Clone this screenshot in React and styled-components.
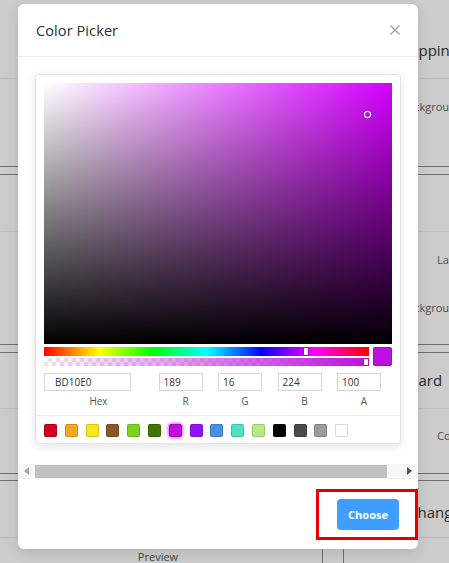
import React from 'react';
import styled, { createGlobalStyle } from 'styled-components';

const Global = createGlobalStyle`
  html, body { margin: 0; padding: 0; }
  body {
    font-family: 'Open Sans', 'Liberation Sans', sans-serif;
    background: #fff;
    width: 449px;
    height: 563px;
    overflow: hidden;
  }
  * { box-sizing: border-box; }
`;

const Screen = styled.div`
  position: relative;
  width: 449px;
  height: 563px;
  overflow: hidden;
  background: #fff;
`;

/* ---------- background page ---------- */
const Page = styled.div`
  display: flex;
  flex-direction: column;
`;

const lineColor = { dark: '#8c8c8c', faint: '#ececec', none: 'transparent' };

const Band = styled.div`
  height: ${p => p.$h}px;
  padding-top: ${p => p.$pt || 0}px;
  border-bottom: 1px solid ${p => lineColor[p.$line || 'none']};
  display: flex;
  flex-direction: column;
  gap: ${p => p.$gap || 0}px;
`;

const Heading = styled.div`
  margin-left: ${p => p.$x}px;
  font-size: 15px;
  line-height: 20px;
  color: #353535;
  white-space: nowrap;
`;

const Label = styled.div`
  margin-left: ${p => p.$x}px;
  font-size: 11px;
  line-height: 14px;
  color: #646464;
  white-space: nowrap;
`;

const BottomRow = styled.div`
  height: 25px;
  display: flex;
`;

const Cell = styled.div`
  width: ${p => p.$w}px;
  border-right: ${p => (p.$border ? '1px solid #8c8c8c' : 'none')};
  display: flex;
  justify-content: center;
  padding-top: 12px;
  padding-right: ${p => p.$pr || 0}px;
  font-size: 11px;
  line-height: 14px;
  color: #555;
`;

const Dim = styled.div`
  position: absolute;
  inset: 0;
  background: rgba(0, 0, 0, 0.2);
`;

/* ---------- modal ---------- */
const Modal = styled.div`
  position: absolute;
  left: 18px;
  top: 4px;
  width: 400px;
  height: 545px;
  background: #fff;
  border-radius: 6px;
  box-shadow: 0 4px 14px rgba(0, 0, 0, 0.12);
  display: flex;
  flex-direction: column;
  overflow: hidden;
`;

const Header = styled.div`
  height: 53px;
  padding: 0 18px;
  border-bottom: 1px solid #ebebeb;
  display: flex;
  align-items: center;
  justify-content: space-between;
`;

const Title = styled.div`
  font-size: 14.5px;
  color: #303030;
  letter-spacing: 0.1px;
`;

const Close = styled.button`
  border: none;
  background: none;
  padding: 0;
  width: 10px;
  height: 10px;
  display: flex;
  cursor: pointer;
`;

const Body = styled.div`
  flex: 1;
  padding: 17px 17px 0 17px;
  display: flex;
  flex-direction: column;
`;

const Card = styled.div`
  width: 366px;
  border: 1px solid #e4e4e4;
  border-radius: 4px;
  box-shadow: 0 2px 8px rgba(0, 0, 0, 0.12);
  background: #fff;
`;

const Top = styled.div`
  padding: 8px 8px 7px;
  display: flex;
  flex-direction: column;
`;

const Saturation = styled.div`
  position: relative;
  height: 261px;
  background: linear-gradient(to top, #000, rgba(0, 0, 0, 0)),
    linear-gradient(to right, #fff, hsl(290, 100%, 50%));
`;

const SatPointer = styled.div`
  position: absolute;
  left: 321px;
  top: 29px;
  width: 5px;
  height: 5px;
  border-radius: 50%;
  box-shadow: 0 0 0 1.2px #fff, 0 0 1px 2px rgba(0, 0, 0, 0.3);
`;

const Controls = styled.div`
  margin-top: 3px;
  display: flex;
  gap: 4px;
`;

const Sliders = styled.div`
  flex: 1;
  display: flex;
  flex-direction: column;
  gap: 2px;
`;

const Hue = styled.div`
  position: relative;
  height: 9px;
  background: linear-gradient(to right, #f00 0%, #ff0 17%, #0f0 33%, #0ff 50%, #00f 67%, #f0f 83%, #f00 100%);
`;

const Alpha = styled.div`
  position: relative;
  height: 8px;
  background:
    linear-gradient(to right, rgba(189, 16, 224, 0), rgb(189, 16, 224)),
    repeating-conic-gradient(#e6e6e6 0% 25%, #fff 0% 50%) 0 0 / 8px 8px;
`;

const Thumb = styled.div`
  position: absolute;
  top: 1px;
  left: ${p => p.$x}px;
  width: 4px;
  height: calc(100% - 2px);
  background: #fff;
  border-radius: 1px;
  box-shadow: 0 0 2px rgba(0, 0, 0, 0.6);
`;

const Preview = styled.div`
  width: 19px;
  height: 19px;
  border-radius: 2px;
  background: #bd10e0;
  box-shadow: inset 0 0 0 1px rgba(0, 0, 0, 0.15);
`;

const Fields = styled.div`
  margin-top: 7px;
  display: grid;
  grid-template-columns: 109px 54px 54px 54px 54px;
  column-gap: 5.5px;
`;

const Field = styled.div`
  display: flex;
  flex-direction: column;
`;

const Input = styled.input`
  width: ${p => p.$w}px;
  height: 18px;
  border: 1px solid #d6d6d6;
  border-radius: 0;
  padding: 0 0 0 ${p => p.$pl}px;
  font-family: 'Open Sans', 'Liberation Sans', sans-serif;
  font-size: 10px;
  color: #333;
  outline: none;
`;

const FieldLabel = styled.div`
  margin-top: 4px;
  text-align: center;
  font-size: 10px;
  line-height: 13px;
  color: #555;
`;

const Presets = styled.div`
  border-top: 1px solid #ececec;
  padding: 8px 8px 6px;
  display: flex;
  gap: 7.8px;
`;

const Swatch = styled.div`
  width: 13px;
  height: 13px;
  border-radius: 2px;
  background: ${p => p.$c};
  box-shadow: inset 0 0 0 1px rgba(0, 0, 0, 0.15)
    ${p => (p.$active ? `, 0 0 4px ${p.$c}` : '')};
`;

const Scrollbar = styled.div`
  margin: 20px -17px 0 -17px;
  height: 14px;
  background: #f7f7f7;
  display: flex;
  align-items: center;
`;

const Arrow = styled.div`
  width: 17px;
  display: flex;
  justify-content: center;
`;

const ScrollThumb = styled.div`
  width: 352px;
  height: 13px;
  background: #c1c1c1;
`;

const Spacer = styled.div`
  flex: 1;
`;

const Footer = styled.div`
  border-top: 1px solid #f2f2f2;
  padding: 10px 0 9px;
  display: flex;
  justify-content: flex-end;
`;

const Highlight = styled.div`
  border: 3px solid #e50000;
  padding: 7px 16px 7px 18px;
  display: flex;
`;

const Choose = styled.button`
  width: 62px;
  height: 31px;
  border: none;
  border-radius: 4px;
  background: #409eff;
  color: #fff;
  font-family: 'Open Sans', 'Liberation Sans', sans-serif;
  font-weight: 700;
  font-size: 11px;
  cursor: pointer;
`;

const presets = [
  '#D0021B', '#F5A623', '#F8E71C', '#8B572A', '#7ED321', '#417505', '#BD10E0',
  '#9013FE', '#4A90E2', '#50E3C2', '#B8E986', '#000000', '#4A4A4A', '#9B9B9B', '#FFFFFF',
];

const fields = [
  { label: 'Hex', value: 'BD10E0', w: 87, pl: 10 },
  { label: 'R', value: '189', w: 44, pl: 4 },
  { label: 'G', value: '16', w: 44, pl: 4 },
  { label: 'B', value: '224', w: 44, pl: 4 },
  { label: 'A', value: '100', w: 44, pl: 4 },
];

export default function App() {
  return (
    <Screen>
      <Global />
      <Page>
        <Band $h={79} $pt={40} $line="faint"><Heading $x={392}>Shopping</Heading></Band>
        <Band $h={88} $pt={21} $line="dark"><Label $x={401}>Background</Label></Band>
        <Band $h={8} $line="dark" />
        <Band $h={57} $line="faint" />
        <Band $h={113} $pt={21} $gap={34} $line="dark">
          <Label $x={437}>Label</Label>
          <Label $x={401}>Background</Label>
        </Band>
        <Band $h={8} $line="dark" />
        <Band $h={56} $pt={17} $line="faint"><Heading $x={409}>Card</Heading></Band>
        <Band $h={65} $pt={20} $line="dark"><Label $x={437}>Color</Label></Band>
        <Band $h={7} $line="dark" />
        <Band $h={57} $pt={21} $line="faint"><Heading $x={408}>Change</Heading></Band>
        <BottomRow>
          <Cell $w={323} $border $pr={6}>Preview</Cell>
          <Cell $w={21} $border />
        </BottomRow>
      </Page>
      <Dim />
      <Modal>
        <Header>
          <Title>Color Picker</Title>
          <Close aria-label="close">
            <svg width="10" height="10" viewBox="0 0 10 10">
              <path d="M0.5 0.5 L9.5 9.5 M9.5 0.5 L0.5 9.5" stroke="#9a9a9a" strokeWidth="1.1" />
            </svg>
          </Close>
        </Header>
        <Body>
          <Card>
            <Top>
              <Saturation><SatPointer /></Saturation>
              <Controls>
                <Sliders>
                  <Hue><Thumb $x={260} /></Hue>
                  <Alpha><Thumb $x={320} /></Alpha>
                </Sliders>
                <Preview />
              </Controls>
              <Fields>
                {fields.map(f => (
                  <Field key={f.label}>
                    <Input $w={f.w} $pl={f.pl} defaultValue={f.value} />
                    <FieldLabel>{f.label}</FieldLabel>
                  </Field>
                ))}
              </Fields>
            </Top>
            <Presets>
              {presets.map(c => (
                <Swatch key={c} $c={c} $active={c === '#BD10E0'} />
              ))}
            </Presets>
          </Card>
          <Scrollbar>
            <Arrow>
              <svg width="5" height="8" viewBox="0 0 5 8"><path d="M5 0 L0 4 L5 8 Z" fill="#a8a8a8" /></svg>
            </Arrow>
            <ScrollThumb />
            <Spacer />
            <Arrow>
              <svg width="5" height="8" viewBox="0 0 5 8"><path d="M0 0 L5 4 L0 8 Z" fill="#505050" /></svg>
            </Arrow>
          </Scrollbar>
        </Body>
        <Footer>
          <Highlight>
            <Choose>Choose</Choose>
          </Highlight>
        </Footer>
      </Modal>
    </Screen>
  );
}
